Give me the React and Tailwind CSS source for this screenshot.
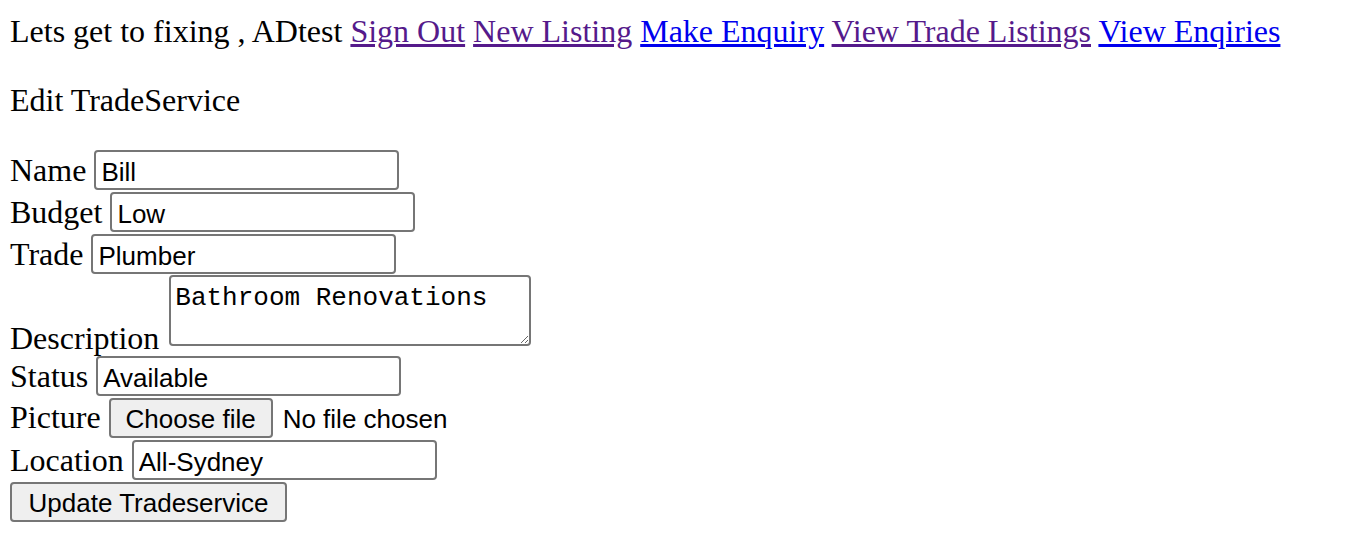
export default function App() {
  const inputCls =
    "box-border h-[40px] w-[305px] rounded-[4px] border-2 border-solid border-[#767676] bg-white px-[5px] pt-[4px] pb-0 font-['Liberation_Sans',Arial,sans-serif] text-[26px] leading-[30px] text-black outline-none";
  const btnCls =
    "box-border h-[40px] rounded-[4px] border-2 border-solid border-[#767676] bg-[#efefef] px-[12px] pt-[2px] pb-0 font-['Liberation_Sans',Arial,sans-serif] text-[26px] leading-[30px] text-black";

  return (
    <div className="min-h-[544px] bg-white pl-[10px] pt-[13px] font-['Liberation_Serif','Times_New_Roman',serif] text-[32px] leading-[37px] text-black">
      <div className="whitespace-nowrap">
        Lets get to fixing , ADtest{" "}
        <a href="#" className="text-[#551a8b] underline">Sign Out</a>{" "}
        <a href="#" className="text-[#551a8b] underline">New Listing</a>{" "}
        <a href="#" className="text-[#0000ee] underline">Make Enquiry</a>{" "}
        <a href="#" className="text-[#551a8b] underline">View Trade Listings</a>{" "}
        <a href="#" className="text-[#0000ee] underline">View Enqiries</a>
      </div>

      <div className="mt-[32px]">Edit TradeService</div>

      <form className="mt-[31px] flex flex-col gap-[2px]" onSubmit={(e) => e.preventDefault()}>
        <div className="flex items-baseline gap-[8px]">
          <span>Name</span>
          <input className={inputCls} defaultValue="Bill" />
        </div>
        <div className="flex items-baseline gap-[8px]">
          <span>Budget</span>
          <input className={inputCls} defaultValue="Low" />
        </div>
        <div className="flex items-baseline gap-[8px]">
          <span>Trade</span>
          <input className={inputCls} defaultValue="Plumber" />
        </div>
        <div className="-mt-px flex items-end gap-[10px]">
          <span>Description</span>
          <textarea
            className="mb-[11px] box-border h-[71px] w-[362px] rounded-[4px] border-2 border-solid border-[#767676] bg-white px-[4px] pt-[6px] font-['Liberation_Mono','Courier_New',monospace] text-[26px] leading-[30px] text-black outline-none"
            defaultValue="Bathroom Renovations"
          />
        </div>
        <div className="-mt-[3px] flex items-baseline gap-[8px]">
          <span>Status</span>
          <input className={inputCls} defaultValue="Available" />
        </div>
        <div className="flex items-baseline gap-[8px]">
          <span>Picture</span>
          <button type="button" className={btnCls + " w-[164px]"}>Choose file</button>
          <span className="ml-[2px] font-['Liberation_Sans',Arial,sans-serif] text-[26px]">No file chosen</span>
        </div>
        <div className="flex items-baseline gap-[8px]">
          <span>Location</span>
          <input className={inputCls} defaultValue="All-Sydney" />
        </div>
        <div className="flex">
          <button type="submit" className={btnCls + " w-[277px]"}>Update Tradeservice</button>
        </div>
      </form>
    </div>
  );
}
